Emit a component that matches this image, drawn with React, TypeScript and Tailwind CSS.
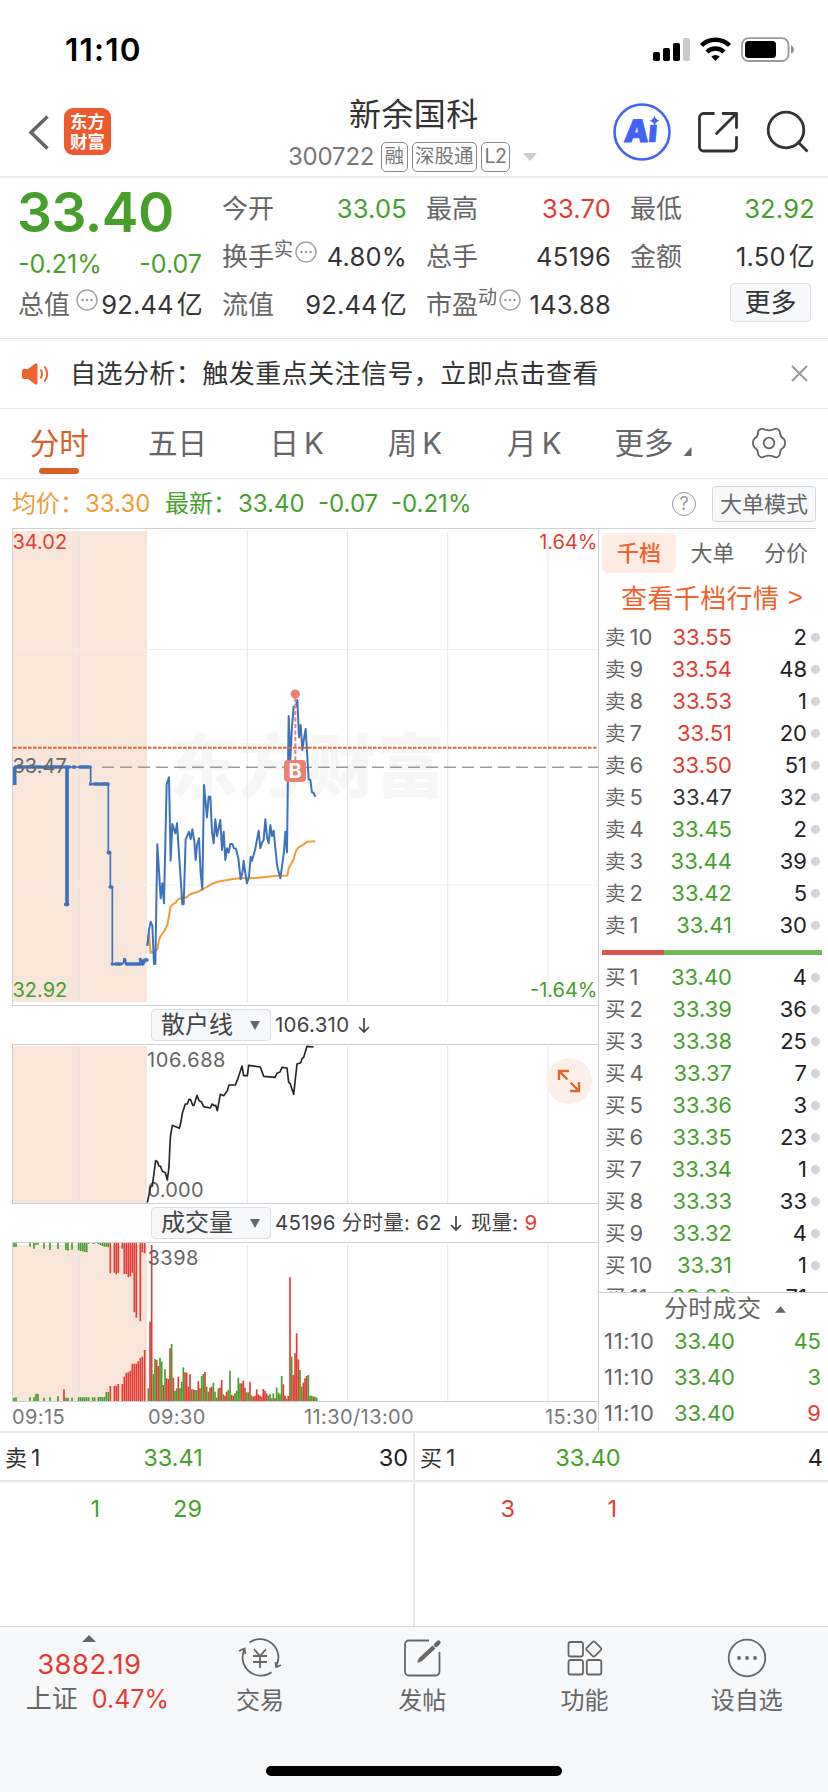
import React from 'react';

type Level = [string, string, string];

const RED = '#e33b32';
const GREEN = '#469f2b';

const asks: Level[] = [
    ['10', '33.55', '2'],
    ['9', '33.54', '48'],
    ['8', '33.53', '1'],
    ['7', '33.51', '20'],
    ['6', '33.50', '51'],
    ['5', '33.47', '32'],
    ['4', '33.45', '2'],
    ['3', '33.44', '39'],
    ['2', '33.42', '5'],
    ['1', '33.41', '30'],
];

const bids: Level[] = [
    ['1', '33.40', '4'],
    ['2', '33.39', '36'],
    ['3', '33.38', '25'],
    ['4', '33.37', '7'],
    ['5', '33.36', '3'],
    ['6', '33.35', '23'],
    ['7', '33.34', '1'],
    ['8', '33.33', '33'],
    ['9', '33.32', '4'],
    ['10', '33.31', '1'],
    ['11', '33.30', '71'],
];

const gridX = [79.7, 247.3, 347.5, 447.7, 548];

// chart series are stored at 3x resolution
const pricePoints = '442,858 447,810 452,785 457,797 462,912 466,912 472,553 482,715 487,670 492,730 500,372 507,352 512,602 517,492 526,520 531,490 547,733 551,733 557,538 567,515 572,538 577,508 583,545 587,600 591,555 597,535 602,640 607,688 612,375 621,472 626,410 631,410 636,515 641,550 646,478 651,528 661,480 666,570 671,515 676,600 681,565 686,578 691,552 697,552 702,565 708,566 715,595 722,658 727,640 731,602 736,640 741,670 747,650 752,590 756,602 766,566 776,512 781,565 786,548 791,540 796,478 801,530 806,550 811,495 816,528 821,512 831,615 841,655 846,620 852,575 856,515 861,577 866,168 871,300 876,200 881,140 887,140 892,120 897,232 902,195 907,270 912,235 917,207 926,358 931,360 936,397 941,399 946,410';
const averagePoints = '442,855 447,820 452,878 462,876 472,868 477,840 482,828 492,815 502,795 508,762 512,740 520,732 527,728 535,717 560,712 570,703 590,697 610,687 637,671 660,664 700,657 720,655 770,654 830,647 862,647 866,625 880,600 888,573 895,563 905,557 915,550 922,545 946,544';
const retailPoints = '442,608 452,560 457,558 467,482 472,485 477,498 481,498 487,514 496,518 502,540 507,500 510,430 512,405 517,376 538,385 542,370 547,340 556,312 562,312 567,298 572,299 578,316 582,316 591,286 597,302 604,305 611,320 631,324 636,312 642,317 647,316 652,332 661,283 671,287 682,272 687,255 706,255 714,235 726,198 731,227 742,227 746,196 781,201 791,229 825,232 831,220 840,216 846,202 861,204 866,247 870,250 881,283 891,192 902,188 906,176 911,172 921,139 941,141';

const volumeBars = 'g1165 r965 r735 g1122 g1077 r1080 r1098 g1073 g1085 r1155 g1108 r1135 r1137 r1045 g1032 r1133 g1172 g1165 r1130 g1165 g1145 g1102 r1117 r1118 r1160 r1123 g1168 r1168 g1170 g1170 r1143 r1165 g1128 g1122 r1116 g1160 g1175 r1163 r1160 g1148 g1175 r1193 g1165 r1163 r1140 g1183 r1187 r1175 g1170 g1112 r1185 r1187 g1180 g1172 g1133 g1150 r1150 r1142 r1163 g1177 g1177 r1145 g1187 r1190 r1187 r1168 r1183 r1187 r1190 r1167 r1172 r1180 g1187 g1182 r1195 g1180 r1195 g1162 g1178 g1183 g1128 r1153 r1187 r1195 r1188 r832 g1070 r1125 r1060 r1000 r1078 g1110 g1160 r1148 r1135 r1128 g1125 g1187 g1187 r1190 g1190 g1193'.split(' ');

// call auction: [x, top bar end, bottom bar start, color]
const auctionBars: [number, number, number, string][] = [
    [42, 741, 1193, GREEN], [48, 741, 1192, GREEN], [90, 740, 1192, GREEN], [102, 746, 1192, GREEN],
    [108, 734, 1181, GREEN], [114, 734, 1181, GREEN], [132, 746, 1193, GREEN], [150, 750, 1192, GREEN],
    [174, 747, 1189, GREEN], [198, 750, 1193, GREEN], [204, 752, 1193, GREEN], [216, 749, 1193, GREEN],
    [236, 751, 1192, GREEN], [242, 753, 1192, GREEN], [248, 754, 1192, GREEN], [254, 756, 1192, GREEN],
    [260, 757, 1192, GREEN], [266, 731, 1192, GREEN], [278, 731, 1192, GREEN], [284, 731, 1192, GREEN],
    [295, 733, 1191, GREEN], [301, 735, 1191, GREEN], [307, 738, 1191, GREEN], [313, 740, 1191, GREEN],
    [319, 740, 1176, GREEN], [325, 742, 1176, GREEN], [331, 820, 1158, RED], [343, 818, 1158, RED],
    [349, 823, 1157, RED], [355, 818, 1152, RED], [367, 746, 1152, RED], [373, 822, 1130, RED],
    [379, 822, 1118, RED], [385, 832, 1117, RED], [391, 829, 1112, RED], [397, 818, 1091, RED],
    [403, 937, 1091, RED], [409, 953, 1091, RED], [415, 729, 1084, RED], [421, 964, 1074, RED],
    [427, 757, 1070, RED], [434, 760, 1050, RED],
];

function StatusBar() {
    return (
        <div className="flex h-[88px] items-start justify-between pt-[36px] pr-[33px] pl-[65px]">
            <div className="text-[31.500px] leading-[28px] font-semibold tracking-[1.200px] text-black">11:10</div>
            <svg width="144" height="28" viewBox="651 36 144 28">
                <rect x="653" y="52" width="7" height="9" rx="1.8"/>
                <rect x="663" y="48" width="7" height="13" rx="1.8"/>
                <rect x="673" y="43" width="7" height="18" rx="1.8"/>
                <rect x="683" y="38" width="7" height="23" rx="1.8" fill="#cbcbcb"/>
                <g fill="none" stroke="#000" strokeWidth="4.4">
                    <path d="M701.5 45.5a20 20 0 0 1 28 0"/>
                    <path d="M707 52a12.2 12.2 0 0 1 17 0"/>
                </g>
                <path d="M715.5 61l-4.2-4.4a6.2 6.2 0 0 1 8.4 0z"/>
                <rect x="742" y="38.2" width="46.500" height="22.800" rx="6.500" fill="none" stroke="#999" strokeWidth="1.8"/>
                <rect x="745" y="41" width="31" height="17" rx="3.500"/>
                <path d="M791 45.500c3.800 1 3.800 7 0 8z" fill="#8a8a8a"/>
            </svg>
        </div>
    );
}

function Badge({children}: { children: React.ReactNode }) {
    return (
        <span className="flex h-[30px] items-center rounded-[5px] border border-[#888] px-[2.500px] text-[19.500px] leading-none text-[#777]">
            {children}
        </span>
    );
}

function Header() {
    return (
        <header className="flex h-[90px] border-b-2 border-[#ececec]">
            <div className="flex w-[288px] items-start pt-[20px] pl-[28px]">
                <svg width="22" height="47" viewBox="28 108 22 47" fill="none" stroke="#666" strokeWidth="3.600">
                    <path d="M47.500 116.500L31 132.500l16.500 16"/>
                </svg>
                <div className="ml-[14px] flex h-[47px] w-[47px] flex-col items-center justify-center gap-[3px] rounded-[9px] bg-[#ee5a2b] text-[17.500px] leading-[17px] font-bold text-white">
                    <span>东方</span>
                    <span>财富</span>
                </div>
            </div>
            <div className="flex flex-col pt-[9px]">
                <h1 className="pl-[61px] text-[32px] leading-[36px] tracking-[0.400px] text-[#333]">新余国科</h1>
                <div className="mt-[9px] flex items-center">
                    <span className="w-[93px] text-[24px] leading-none tracking-[-0.200px] text-[#777]">300722</span>
                    <div className="flex gap-[4px]">
                        <Badge>融</Badge>
                        <Badge>深股通</Badge>
                        <Badge><span className="tracking-[-0.500px]">L2</span></Badge>
                    </div>
                    <svg className="ml-[13px]" width="14" height="8" viewBox="0 0 14 8">
                        <path d="M0 0h14L7 8z" fill="#ccc"/>
                    </svg>
                </div>
            </div>
            <svg className="mt-[14px] mr-[18px] ml-auto" width="200" height="60" viewBox="610 102 200 60" fill="none">
                <circle cx="642" cy="132" r="27.500" stroke="#4263f5" strokeWidth="2.600"/>
                <text x="624" y="142.500" fontSize="31" fontWeight="900" fill="#4263f5" stroke="#4263f5" strokeWidth="1" transform="skewX(-5) translate(12 0)">A</text>
                <text x="648" y="142.500" fontSize="31" fontWeight="900" fill="#4263f5" stroke="#4263f5" strokeWidth=".6" transform="skewX(-5) translate(12 0)">ı</text>
                <path d="M654.500 115.500q1 4.200 5 5.300-4 1-5 5.200-1-4.200-5-5.200 4-1.100 5-5.300z" fill="#4263f5"/>
                <g stroke="#333" strokeWidth="2.800">
                    <path d="M713.500 113.500h-10a4 4 0 0 0-4 4v29.500a4 4 0 0 0 4 4h29a4 4 0 0 0 4-4v-9.500M723 113.500h13.500v14M736 114l-19.500 19.500" strokeLinecap="round" strokeLinejoin="round"/>
                    <circle cx="786" cy="130" r="17.800"/>
                    <path d="M797.500 141.500l10 10"/>
                </g>
            </svg>
        </header>
    );
}

function MoreDots({className}: { className: string }) {
    return (
        <svg className={className} width="22" height="22" viewBox="0 0 22 22">
            <circle cx="11" cy="11" r="10" fill="none" stroke="#a3a3a3" strokeWidth="1.500"/>
            <circle cx="6.500" cy="11" r="1.300" fill="#999"/>
            <circle cx="11" cy="11" r="1.300" fill="#999"/>
            <circle cx="15.500" cy="11" r="1.300" fill="#999"/>
        </svg>
    );
}

interface StatProps {
    label: string;
    value: string;
    sup?: string;
    dots?: boolean;
    className?: string;
}

function Stat({label, value, sup, dots, className = 'text-[#333]'}: StatProps) {
    const unit = value.endsWith('亿');

    return (
        <div className="flex h-[48px] items-center leading-none whitespace-nowrap">
            <span className="text-[26px] text-[#666]">{label}</span>
            {sup && <span className="mb-[15px] text-[19px] text-[#666]">{sup}</span>}
            {dots && <MoreDots className={sup ? 'mb-[11px] ml-[2px]' : 'mb-[11px] ml-[6px]'}/>}
            <span className={`-mr-px ml-auto text-[25.500px] tracking-[0.200px] ${className}`}>
                {unit ? value.slice(0, -1) : value}
                {unit && <span className="ml-[3px] text-[26px]">亿</span>}
            </span>
        </div>
    );
}

function Quote() {
    return (
        <section className="grid h-[161px] grid-cols-4 gap-x-5 border-b border-[#e8e8e8] pt-[7px] pr-[14px] pl-[18px]">
            <div>
                <div className="-ml-px h-[55px] text-[55px] leading-[55px] font-semibold tracking-[-0.500px] text-[#469f2b]">33.40</div>
                <div className="flex h-[41px] items-center justify-between pt-[7px] text-[25px] leading-none text-[#469f2b]">
                    <span>-0.21%</span>
                    <span>-0.07</span>
                </div>
                <Stat label="总值" value="92.44亿" dots/>
            </div>
            <div>
                <Stat label="今开" value="33.05" className="text-[#469f2b]"/>
                <Stat label="换手" value="4.80%" sup="实" dots/>
                <Stat label="流值" value="92.44亿"/>
            </div>
            <div>
                <Stat label="最高" value="33.70" className="text-[#e33b32]"/>
                <Stat label="总手" value="45196"/>
                <Stat label="市盈" value="143.88" sup="动" dots/>
            </div>
            <div>
                <Stat label="最低" value="32.92" className="text-[#469f2b]"/>
                <Stat label="金额" value="1.50亿"/>
                <button className="mt-[2px] mr-[3px] ml-auto flex h-[39px] w-[81px] items-center justify-center rounded-[4px] border border-[#dcdee3] bg-[#f7f8fa] text-[26px] leading-none text-[#333]">更多</button>
            </div>
        </section>
    );
}

function Notice() {
    return (
        <section className="flex h-[70px] items-center border-b border-[#e8e8e8] pr-[20px] pl-[22px]">
            <svg width="27" height="22" viewBox="0 0 27 22">
                <path d="M2 6h4l7-5.300q2-1 2.500 1v18.600q-.5 2-2.500 1L6 16H2q-2-.2-2-2V8q0-1.800 2-2z" fill="#f0622d"/>
                <path d="M18.500 6.500q3 4.500 0 9M22.500 3.500q5.500 7.500 0 15" fill="none" stroke="#f0622d" strokeWidth="1.900"/>
            </svg>
            <p className="ml-[21px] text-[26px] leading-none tracking-[0.450px] text-[#333]">自选分析：触发重点关注信号，立即点击查看</p>
            <svg className="ml-auto" width="17" height="17" viewBox="0 0 17 17" stroke="#999" strokeWidth="2">
                <path d="M1 1l15 15M16 1L1 16"/>
            </svg>
        </section>
    );
}

function Tabs() {
    return (
        <nav className="grid h-[70px] grid-cols-7 border-b border-[#e8e8e8] text-[29.500px] leading-none text-[#666]">
            <span className="flex flex-col items-center pt-[20px] text-[#d86027]">
                分时
                <i className="mt-[9px] h-[6px] w-[40px] rounded-full bg-[#d86027]"/>
            </span>
            <span className="pt-[20px] text-center">五日</span>
            <span className="pt-[20px] pl-[2px] text-center">日<span className="ml-[5px]">K</span></span>
            <span className="pt-[20px] pl-[2px] text-center">周<span className="ml-[5px]">K</span></span>
            <span className="pt-[20px] pl-[4px] text-center">月<span className="ml-[5px]">K</span></span>
            <span className="flex justify-center pt-[20px] pl-[5px]">
                更多
                <svg className="mt-[18px] ml-[9px]" width="9" height="9" viewBox="0 0 8 9">
                    <path d="M8 0v9H0z" fill="#666"/>
                </svg>
            </span>
            <span className="flex justify-center pt-[18px]">
                <svg width="34" height="32" viewBox="-17 -16 34 32" fill="none" stroke="#666" strokeWidth="1.800">
                    <path d="M-8.500-14q2-1 4 .5 4.500 1.800 9 0 2-1.500 4-.5 3 1.500 2.500 4.500.5 3.500 3.500 5 1.500 1.500 1.500 4.500t-1.500 4.500q-3 1.500-3.500 5 .5 3-2.500 4.500-2 1-4-.5-4.500-1.800-9 0-2 1.500-4 .5-3-1.500-2.500-4.500-.5-3.500-3.500-5-1.500-1.500-1.500-4.500t1.500-4.500q3-1.500 3.500-5-.5-3 2.500-4.500z"/>
                    <circle r="5.300"/>
                </svg>
            </span>
        </nav>
    );
}

function Legend() {
    return (
        <div className="flex h-[49px] items-center pr-[12px] pl-[12px] text-[24px] leading-none whitespace-nowrap text-[#469f2b]">
            <span className="w-[153px] text-[#f09c35]">均价：<span className="ml-px">33.30</span></span>
            <span className="w-[153px]">最新：<span className="ml-px">33.40</span></span>
            <span className="w-[73px]">-0.07</span>
            <span>-0.21%</span>
            <span className="ml-auto flex h-[24px] w-[24px] items-center justify-center rounded-full border-[1.500px] border-[#999] text-[18px] text-[#999]">?</span>
            <button className="ml-[16px] flex h-[36px] w-[104px] items-center justify-center rounded-[4px] border border-[#d3d5db] bg-[#f7f8fa] text-[22px] text-[#666]">大单模式</button>
        </div>
    );
}

function Grid({top, bottom}: { top: number; bottom: number }) {
    return (
        <>
            <rect x="13" y={top} width="134" height={bottom - top} fill="#f8e6da"/>
            {gridX.map(x => <path key={x} d={`M${x} ${top}V${bottom}`} stroke="#e6e6ec"/>)}
        </>
    );
}

function PriceChart() {
    return (
        <svg className="block" width="586" height="478" viewBox="12 528 586 478" fill="none" fontSize="20">
            <text x="169" y="792" fontSize="69" fontWeight="900" fill="#f6f6f7">东方财富</text>
            <Grid top={531} bottom={1002}/>
            <path d="M13 649.500h585M13 885h585" stroke="#eeeef3"/>
            <path d="M12 528.500h586M12.500 528v478M12 1005.500h586" stroke="#cfd0d6"/>
            <path d="M102 767.300h496" stroke="#999" strokeWidth="1.500" strokeDasharray="12 6"/>
            <g transform="translate(0 660) scale(.33333)" strokeLinejoin="round">
                <polyline points={averagePoints} stroke="#f09c35" strokeWidth="6"/>
                <path d="M44 321h228v51h53v206h6v103h6v231h31l6-12 4 12h40l6-12 4 12 6-12h8" stroke="#3f72bd" strokeWidth="5"/>
                <path d="M44 321v54M201 321v412" stroke="#3f72bd" strokeWidth="11"/>
                <path d="M46 321h50M104 321h20M132 321h55M196 321h12M220 321h4M240 321h30M272 372h0M283 372h14M303 372h21M325 578h4M331 681h4M337 912h0M347 912h15M374 899v6M380 912h40M421 899l7 13 6-12h7M197 733h6" stroke="#3f72bd" strokeWidth="11" strokeLinecap="round"/>
                <polyline points={pricePoints} stroke="#3f72bd" strokeWidth="6"/>
            </g>
            <path d="M13 747.700h585" stroke="#dc6a32" strokeWidth="2" strokeDasharray="3.600 1.400"/>
            <path d="M295.300 698v62" stroke="#ef7f70" strokeWidth="2" strokeDasharray="4 2.500"/>
            <circle cx="295.300" cy="694" r="4.600" fill="#ef7f70"/>
            <rect x="284" y="760" width="22" height="22" rx="4" fill="#ef7f70"/>
            <text x="295.200" y="778" fontSize="20" fontWeight="700" fill="#fff" textAnchor="middle">B</text>
            <text x="12.500" y="549" fill={RED}>34.02</text>
            <text x="597.500" y="549" fill={RED} textAnchor="end">1.64%</text>
            <text x="12.500" y="773" fill="#666">33.47</text>
            <text x="12.500" y="997" fill={GREEN}>32.92</text>
            <text x="597.500" y="997" fill={GREEN} textAnchor="end">-1.64%</text>
        </svg>
    );
}

function RetailChart() {
    return (
        <div className="relative">
            <svg className="block" width="586" height="160" viewBox="12 1044 586 160" fill="none" fontSize="20">
                <Grid top={1046} bottom={1203}/>
                <path d="M12 1044.500h586M12.500 1044v160M12 1203.500h586" stroke="#cfd0d6"/>
                <text x="147" y="1066.500" fill="#666" letterSpacing=".6">106.688</text>
                <text x="147.500" y="1196.500" fill="#666" letterSpacing=".2">0.000</text>
                <polyline points={retailPoints} transform="translate(0 1000) scale(.33333)" stroke="#262626" strokeWidth="5" strokeLinejoin="round"/>
            </svg>
            <span className="absolute top-[14px] right-[6px] flex h-[46px] w-[46px] items-center justify-center rounded-full bg-[#fcefe9]">
                <svg width="24" height="24" viewBox="0 0 24 24" fill="none" stroke="#e2672c" strokeWidth="2.400">
                    <path d="M2 11V2h10M2 2l8.500 8.500M22 13v9H13M22 22l-8.500-8.500"/>
                </svg>
            </span>
        </div>
    );
}

function VolumeChart() {
    return (
        <svg className="block" width="586" height="160" viewBox="12 1242 586 160" fill="none" fontSize="20">
            <Grid top={1245} bottom={1401}/>
            <g transform="translate(0 1000) scale(.33333)" strokeWidth="5">
                {auctionBars.map(([x, end, start, color]) => (
                    <path key={x} d={`M${x} 729V${end}M${x} ${start}V1203`} stroke={color}/>
                ))}
                <path d="M192 1168V1203" stroke={RED}/>
                {volumeBars.map((bar, i) => (
                    <path key={i} d={`M${445 + i * 5} ${bar.slice(1)}V1203`} stroke={bar[0] === 'r' ? RED : GREEN}/>
                ))}
            </g>
            <path d="M12 1242.500h586M12.500 1242v160M12 1401.500h586" stroke="#cfd0d6"/>
            <text x="147.500" y="1265" fill="#666" letterSpacing=".5">3398</text>
        </svg>
    );
}

function IndicatorRow({name, children}: { name: string; children: React.ReactNode }) {
    return (
        <div className="flex h-[38px] items-center pl-[139px] text-[20.500px] leading-none tracking-[0.250px] whitespace-pre text-[#444]">
            <button className="mr-[4px] flex h-[32px] w-[120px] items-center justify-between rounded-[4px] border border-[#dcdee3] bg-[#f7f8fa] pr-[10px] pl-[9px] text-[24px] tracking-normal">
                {name}
                <svg width="10" height="9" viewBox="0 0 10 9">
                    <path d="M0 0h10L5 9z" fill="#666"/>
                </svg>
            </button>
            {children}
        </div>
    );
}

function DownArrow() {
    return (
        <svg className="mx-[8.500px]" width="12" height="15" viewBox="0 0 12 15" fill="none" stroke="#444" strokeWidth="1.700">
            <path d="M6 0v14M1 9l5 5 5-5"/>
        </svg>
    );
}

function BookRow({side, level}: { side: string; level: Level }) {
    const [index, price, amount] = level;
    const color = price === '33.47' ? 'text-[#333]' : Number(price) > 33.47 ? 'text-[#e33b32]' : 'text-[#469f2b]';

    return (
        <div className="flex h-[32px] shrink-0 items-center pr-[8px] pl-[6px] text-[22px] leading-none">
            <span className="w-[56px] text-[#666]"><span className="text-[20.500px]">{side}</span><span className="ml-[4px]">{index}</span></span>
            <span className={`w-[71px] text-right ${color}`}>{price}</span>
            <span className="ml-auto text-[22px] text-[#222]">{amount}</span>
            <i className="ml-[4px] h-[9px] w-[9px] rounded-full bg-[#d4d5dc]"/>
        </div>
    );
}

function OrderBook() {
    return (
        <aside className="flex h-[903px] w-[230px] shrink-0 flex-col border-l border-[#cfd0d6]">
            <div className="flex h-[48px] w-[217px] items-start border-t border-[#cfd0d6] pt-[4px] pl-[3px] text-[22px] leading-none text-[#666]">
                <span className="flex h-[40px] w-[74px] shrink-0 items-center justify-center rounded-[6px] bg-[#fdece4] font-medium text-[#f0622d]">千档</span>
                <span className="flex h-[40px] w-[73px] shrink-0 items-center justify-center">大单</span>
                <span className="flex h-[40px] w-[74px] shrink-0 items-center justify-center">分价</span>
            </div>
            <div className="flex h-[45px] items-center pl-[22px] text-[26px] leading-none tracking-[0.400px] text-[#f0622d]">查看千档行情<span className="ml-[8px] font-mono">&gt;</span></div>
            <div className="flex h-[671px] flex-col overflow-hidden">
                {asks.map(level => <BookRow key={level[0]} side="卖" level={level}/>)}
                <div className="mt-[9px] mr-[6px] mb-[6px] ml-[3px] flex h-[5px] shrink-0">
                    <i className="w-[62px] bg-[#d9534f]"/>
                    <i className="flex-1 bg-[#74b957]"/>
                </div>
                {bids.map(level => <BookRow key={level[0]} side="买" level={level}/>)}
            </div>
            <div className="flex h-[31px] shrink-0 items-center border-t border-[#cfd0d6] pt-[2px] pl-[65px] text-[24px] leading-none tracking-[0.300px] text-[#666]">
                分时成交
                <svg className="ml-[14px]" width="11" height="7" viewBox="0 0 10 6">
                    <path d="M0 6h10L5 0z" fill="#666"/>
                </svg>
            </div>
            {['45', '3', '9'].map(amount => (
                <div key={amount} className="flex h-[36px] shrink-0 items-center pr-[7px] pl-[5px] text-[22px] leading-none">
                    <span className="w-[66px] tracking-[0.700px] text-[#666]">11:10</span>
                    <span className="w-[65px] text-right text-[#469f2b]">33.40</span>
                    <span className={`ml-auto ${amount === '9' ? 'text-[#e33b32]' : 'text-[#469f2b]'}`}>{amount}</span>
                </div>
            ))}
        </aside>
    );
}

interface QueueProps {
    side: string;
    price: string;
    amount: string;
    orders: string[];
    className: string;
}

function Queue({side, price, amount, orders, className}: QueueProps) {
    return (
        <div className="flex-1 text-[23.500px] leading-none">
            <div className="flex h-[49px] items-center border-b-2 border-[#e8e8eb] pt-[3px] pr-[5px] pl-[5px] text-[#333]">
                <span className="w-[84px] text-[22px]">{side}<span className="ml-[4px] text-[23px]">1</span></span>
                <span className="w-[168px] text-center text-[#469f2b]">{price}</span>
                <span className="ml-auto text-[#222]">{amount}</span>
            </div>
            <div className={`flex h-[54px] items-center ${className}`}>
                <span className="w-[100px] text-right">{orders[0]}</span>
                <span className="w-[102px] text-right">{orders[1]}</span>
            </div>
        </div>
    );
}

function NavItem({label, children}: { label: string; children: React.ReactNode }) {
    return (
        <div className="flex w-[162.500px] flex-col items-center pt-[9px] text-[24px] leading-none text-[#666]">
            <svg width="44" height="44" viewBox="-22 -22 44 44" fill="none" stroke="#666" strokeWidth="1.800">
                {children}
            </svg>
            <span className="mt-[9px]">{label}</span>
        </div>
    );
}

function BottomNav() {
    return (
        <footer className="flex h-[166px] flex-col border-t border-[#d9d9dc] bg-[#f7f8fa]">
            <div className="flex h-[139px]">
                <div className="flex w-[179px] flex-col items-center pt-[8px] leading-none text-[#e33b32]">
                    <svg width="14" height="7" viewBox="0 0 14 7">
                        <path d="M0 7h14L7 0z" fill="#666"/>
                    </svg>
                    <span className="mt-[9px] text-[27.500px] tracking-[0.400px]">3882.19</span>
                    <span className="mt-[7px] ml-[16px] text-[25px] whitespace-nowrap"><span className="mr-[14px] text-[26px] text-[#666]">上证</span>0.47%</span>
                </div>
                <NavItem label="交易">
                    <path d="M-10.500-15.500a18.300 18.300 0 0 1 26.500 24M11.500 14.300a18.300 18.300 0 0 1-26.500-24M-21-7l5.500-2.500 1 5.500M21 7l-5.500 2.500M16 9l-.500-5"/>
                    <path d="M-6-9l6 7 6-7M0-2v12M-7-2h14M-7 4h14"/>
                </NavItem>
                <NavItem label="发帖">
                    <path d="M7-17.500h-20a4 4 0 0 0-4 4v27a4 4 0 0 0 4 4h26.500a4 4 0 0 0 4-4v-19.500"/>
                    <path d="M-5 5l2-5L10.500-12.500l3 3L0 3z" fill="#666" stroke="none"/>
                    <path d="M14-13l2.500-2.500" strokeWidth="4.300" strokeLinecap="round"/>
                </NavItem>
                <NavItem label="功能">
                    <rect x="-16.500" y="-16" width="14.500" height="14.500" rx="2"/>
                    <rect x="-16.500" y="2" width="14.500" height="14.500" rx="2"/>
                    <rect x="1.800" y="2" width="14.500" height="14.500" rx="2"/>
                    <rect x="3" y="-14.800" width="11.500" height="11.500" rx="1.500" transform="rotate(45 8.750 -9)"/>
                </NavItem>
                <NavItem label="设自选">
                    <circle r="18.300"/>
                    <g fill="#666" stroke="none">
                        <circle cx="-8" r="1.900"/>
                        <circle r="1.900"/>
                        <circle cx="8" r="1.900"/>
                    </g>
                </NavItem>
            </div>
            <div className="mx-auto h-[10px] w-[296px] rounded-full bg-black"/>
        </footer>
    );
}

function App() {
    return (
        <div className="flex h-[1792px] w-[828px] flex-col overflow-hidden bg-white font-['Inter','Noto_Sans_CJK_SC',sans-serif]">
            <StatusBar/>
            <Header/>
            <Quote/>
            <Notice/>
            <Tabs/>
            <Legend/>
            <main className="flex h-[903px] pl-[12px]">
                <div className="w-[586px]">
                    <PriceChart/>
                    <IndicatorRow name="散户线">106.310<DownArrow/></IndicatorRow>
                    <RetailChart/>
                    <IndicatorRow name="成交量">45196 分时量: 62<DownArrow/>现量: <span className="text-[#e33b32]">9</span></IndicatorRow>
                    <VolumeChart/>
                    <div className="flex h-[29px] items-center text-[20px] leading-none tracking-[0.400px] text-[#777]">
                        <span className="w-[136px]">09:15</span>
                        <span className="w-[156px]">09:30</span>
                        <span>11:30/13:00</span>
                        <span className="ml-auto">15:30</span>
                    </div>
                </div>
                <OrderBook/>
            </main>
            <section className="flex h-[195px] border-t-2 border-[#e8e8eb]">
                <Queue side="卖" price="33.41" amount="30" orders={['1', '29']} className="text-[#469f2b]"/>
                <div className="w-[2px] bg-[#e8e8eb]"/>
                <Queue side="买" price="33.40" amount="4" orders={['3', '1']} className="text-[#e33b32]"/>
            </section>
            <BottomNav/>
        </div>
    );
}

export default App;
